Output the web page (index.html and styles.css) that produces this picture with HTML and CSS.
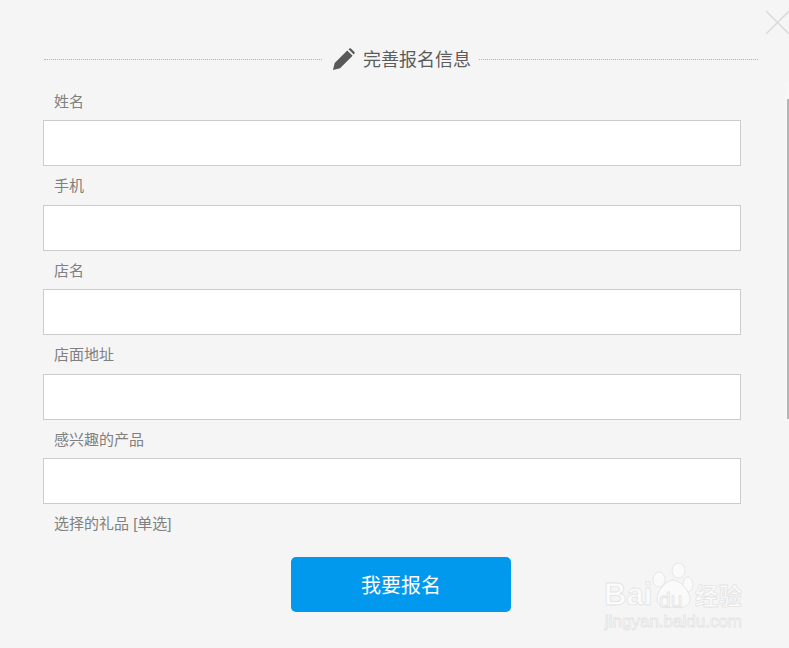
FILE: index.html
```html
<!DOCTYPE html>
<html lang="zh-CN">
<head>
<meta charset="utf-8">
<title>完善报名信息</title>
<link rel="stylesheet" href="styles.css">
</head>
<body>
<div class="dialog">
  <svg class="close" width="24" height="26" viewBox="0 0 24 26" aria-hidden="true"><path d="M1 1 L24 24 M24 1 L1 24" stroke="#dcdcdc" stroke-width="1.6" fill="none"/></svg>
  <div class="track"><div class="thumb"></div></div>
  <div class="title">
    <span class="rule"></span>
    <svg class="pencil" width="23" height="23" viewBox="0 0 24 24" aria-hidden="true"><path fill="#595959" d="M1 23 L2.8 15.6 L15.9 2.5 L21.5 8.1 L8.4 21.2 Z M17.2 1.2 L18.2 0.4 Q19 -0.1 19.8 0.5 L23.4 4.1 Q24 4.9 23.5 5.7 L22.7 6.8 Z"/></svg>
    <span class="title-text">完善报名信息</span>
    <span class="rule rule-right"></span>
  </div>
  <form class="form">
    <div class="field"><label class="label">姓名</label><input class="input" type="text"></div>
    <div class="field"><label class="label">手机</label><input class="input" type="text"></div>
    <div class="field"><label class="label">店名</label><input class="input" type="text"></div>
    <div class="field"><label class="label">店面地址</label><input class="input" type="text"></div>
    <div class="field"><label class="label">感兴趣的产品</label><input class="input" type="text"></div>
    <div class="field"><label class="label">选择的礼品 [单选]</label></div>
    <button class="submit" type="button">我要报名</button>
  </form>
  <div class="mark">
    <svg class="paw" width="42" height="48" viewBox="0 0 42 48" aria-hidden="true">
      <g fill="#fafafa" stroke="#e6e6e6" stroke-width="1">
        <ellipse cx="7" cy="17.5" rx="6" ry="7.5"/>
        <ellipse cx="26.5" cy="8.5" rx="6.5" ry="7.5"/>
        <ellipse cx="36" cy="22.5" rx="5" ry="7.5"/>
        <path d="M21 18 C28 18 38 29 38 37 C38 45 29 47 21 45 C13 47 5 45 5 37 C5 29 14 18 21 18 Z"/>
      </g>
    </svg>
    <span class="mark-bai">Bai</span>
    <span class="mark-du">du</span>
    <span class="mark-jy">经验</span>
    <span class="mark-url">jingyan.baidu.com</span>
  </div>
</div>
</body>
</html>
```
FILE: styles.css
```css
html, body {
  margin: 0;
  padding: 0;
  height: 100%;
}
body {
  background: #f5f5f5;
  overflow: hidden;
  font-family: "Liberation Sans", "Noto Sans CJK SC", sans-serif;
}
.dialog {
  position: relative;
  width: 789px;
  height: 648px;
  box-sizing: border-box;
  padding: 45px 0 0 43px;
  overflow: hidden;
}
.close {
  position: absolute;
  top: 10px;
  left: 765px;
}
.track {
  position: absolute;
  top: 82px;
  left: 785px;
  width: 4px;
  height: 340px;
  background: #f7f7f7;
}
.thumb {
  position: absolute;
  top: 17px;
  left: 2px;
  width: 2px;
  height: 320px;
  background: #b5b5b5;
}
.title {
  display: flex;
  align-items: center;
  width: 715px;
  height: 28px;
  padding-left: 1px;
  box-sizing: border-box;
}
.rule {
  flex: 1;
  border-top: 1px dotted #b0b0b0;
}
.rule-right {
  flex: 0 0 279px;
}
.pencil {
  margin: 1px 8px 0 10px;
}
.title-text {
  font-size: 18px;
  line-height: 30px;
  margin-top: 2px;
  color: #5c5c5c;
  margin-right: 8px;
}
.form {
  width: 698px;
  display: flex;
  flex-direction: column;
}
.field {
  display: flex;
  flex-direction: column;
  height: 84.5px;
}
.field:first-child {
  margin-top: 9px;
  height: 84px;
}
.label {
  height: 38.5px;
  line-height: 40px;
  padding-left: 11px;
  font-size: 15px;
  color: #808080;
}
.field:first-child .label {
  height: 38px;
}
.input {
  display: block;
  box-sizing: border-box;
  width: 698px;
  height: 46px;
  margin: 0;
  padding: 0 10px;
  background: #fff;
  border: 1px solid #ccc;
  border-radius: 0;
  outline: none;
}
.field:last-of-type {
  height: 53px;
}
.submit {
  align-self: flex-start;
  width: 220px;
  height: 55px;
  margin: 0 0 0 248px;
  padding: 0;
  border: none;
  border-radius: 5px;
  background: #0099ee;
  color: #fff;
  font-family: inherit;
  font-size: 20px;
}
.mark {
  position: absolute;
  left: 604px;
  top: 562px;
  width: 160px;
  height: 70px;
}
.paw {
  position: absolute;
  left: 48px;
  top: 0;
}
.mark span {
  position: absolute;
  color: #fbfbfb;
  -webkit-text-stroke: 0.8px #e4e4e4;
  font-family: "Liberation Sans", "Noto Sans CJK SC", sans-serif;
  white-space: nowrap;
}
.mark-bai {
  left: 0;
  top: 16px;
  font-size: 31px;
  line-height: 34px;
  font-weight: bold;
}
.mark-du {
  left: 55px;
  top: 27px;
  font-size: 21px;
  line-height: 22px;
  z-index: 1;
}
.mark-jy {
  left: 91px;
  top: 20px;
  font-size: 23.5px;
  line-height: 30px;
  font-weight: bold;
}
.mark-url {
  left: 1px;
  top: 50px;
  font-size: 17px;
  line-height: 20px;
}
```
